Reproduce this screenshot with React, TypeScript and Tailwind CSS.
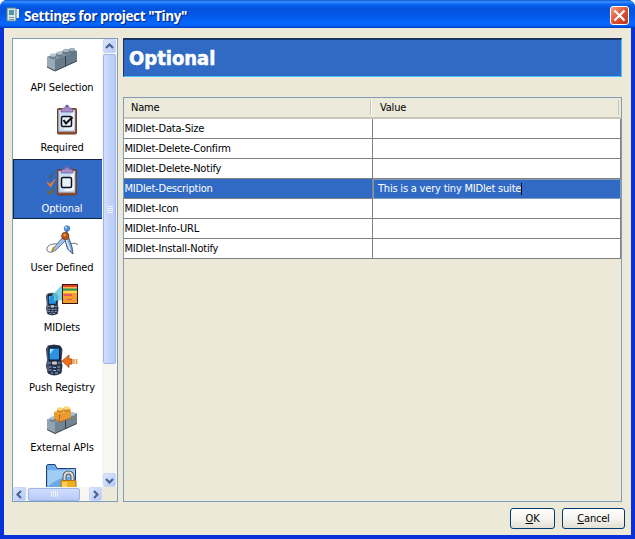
import type { ReactNode } from "react";

const Brick = ({ y = 0, colors }: { y?: number; colors: [string, string, string] }) => (
  <g transform={`translate(0 ${y})`}>
    <path d="M3 15 L24 7 L33 9 L33 19 L10 29 L3 25Z" fill={colors[1]} />
    <path d="M3 15 L24 7 L33 9 L11 18Z" fill={colors[0]} />
    <path d="M11 18 L33 9 L33 19 L11 29Z" fill={colors[1]} />
    <path d="M3 15 L11 18 L11 29 L3 25Z" fill={colors[2]} />
    <path d="M21.5 14 V24.5" stroke="#35424d" strokeWidth="1" />
    <path d="M3 25 L11 29 L33 19" stroke="#3d4852" strokeWidth="1" fill="none" />
  </g>
);

const Stud = ({ x, y, top, side }: { x: number; y: number; top: string; side: string }) => (
  <g>
    <path d={`M${x - 3} ${y} V${y + 3} Q${x} ${y + 5} ${x + 3} ${y + 3} V${y}Z`} fill={side} />
    <ellipse cx={x} cy={y} rx="3" ry="1.8" fill={top} />
  </g>
);

const ApiIcon = () => (
  <>
    <Brick colors={["#8797a5", "#687b8a", "#9aaab7"]} />
    <Stud x={9} y={13} top="#b9c9d6" side="#6c7f8e" />
    <Stud x={15.5} y={11} top="#b0c1ce" side="#667a89" />
    <Stud x={22} y={8.5} top="#a5b7c5" side="#627584" />
    <Stud x={28} y={7.5} top="#9bb0c0" side="#5d7180" />
  </>
);

const Clipboard = () => (
  <>
    <rect x="13.5" y="6.5" width="19" height="25.5" rx="1" fill="#91502c" stroke="#6b4028" />
    <path d="M14.5 8 H31 V29.5 H14.5Z" fill="#d9e9fb" />
    <path d="M15 8 V29 H29 L31 27 V8" fill="#eef5ff" stroke="#8299be" strokeWidth=".7" />
    <path d="M16 10 V28 H20 L28 10Z" fill="#c9dff8" />
    <path d="M17 10 V8 Q17 6 21 6 Q21 3 23 3 Q25 3 25 6 Q29 6 29 8 V10Z" fill="#a78dc8" stroke="#655a93" strokeWidth=".7" />
    <circle cx="23" cy="4.5" r="1" fill="#6457a4" />
    <rect x="17.5" y="14.5" width="10" height="10" rx="1.5" fill="#e5f1ff" stroke="#111" strokeWidth="1.5" />
  </>
);

const RequiredIcon = () => (
  <>
    <Clipboard />
    <path d="M19.5 18 L22 21.5 L28.5 15" stroke="#111" strokeWidth="2.1" fill="none" />
  </>
);

const OptionalIcon = () => (
  <>
    <g transform="translate(0 1)"><Clipboard /></g>
    <path d="M3 12 L6 14.5 L11 9.5 L6.5 17Z" fill="#426080" stroke="#426080" />
    <path d="M3 20 L6 22.5 L11 17.5 L6.5 25Z" fill="#f57b20" stroke="#f57b20" />
    <path d="M3 28 L6 30.5 L11 25.5 L6.5 33Z" fill="#77671e" stroke="#77671e" />
  </>
);

const CompassIcon = () => (
  <>
    <path d="M8 30 Q2 31 3 26 Q5 21 14 22 M27 21.5 Q31 20.5 34 22.5" stroke="#777" fill="none" />
    <path d="M19 15 L9 27 L8 30 L12 28 L22 18Z" fill="#9fc4ed" stroke="#53637b" strokeWidth=".9" />
    <path d="M20.5 16 L23.5 27 L29 32 L28 25 L24.5 15Z" fill="#75a9e5" stroke="#3c4c67" strokeWidth=".9" />
    <path d="M22 17 L26 28" stroke="#e4f2ff" strokeWidth="1.4" />
    <path d="M8 29 L10 25" stroke="#bf9418" strokeWidth="2" />
    <path d="M22 12 L23 8" stroke="#64728a" strokeWidth="2" />
    <circle cx="23" cy="6.5" r="2.8" fill="#4e91e0" stroke="#315da2" strokeWidth=".6" />
    <circle cx="22" cy="5.5" r="1" fill="#c5e6ff" />
    <circle cx="21.3" cy="14" r="3.7" fill="#b95717" stroke="#693418" strokeWidth=".7" />
    <circle cx="20.5" cy="13" r="1.2" fill="#efa260" />
  </>
);

const Phone = () => (
  <>
    <path d="M4 4 Q10 2 16 4 L18 7 L17 18 L18 24 L17 31 Q10 35 4 31 L2.5 24 L3.5 18 L2.5 7Z" fill="#26344e" stroke="#152034" strokeWidth=".8" />
    <path d="M4 5 V29" stroke="#8796ad" strokeWidth=".8" />
    <rect x="5" y="6" width="10.5" height="12" fill="#2b93e2" stroke="#09162b" />
    <path d="M6 7 L10 7 L6 12Z" fill="#8de5ff" />
    <rect x="8" y="19.5" width="5" height="3" rx="1" fill="#cbc9c4" />
    <path d="M4.5 21 H7 M14 21 H16.5 M5 25 H7.5 M9 25.5 H12 M13.5 25 H16 M5 28 H7.5 M9 28.5 H12 M13.5 28 H16 M7 31 H9 M11 31 H14" stroke="#9fb0cf" strokeWidth="1.2" />
  </>
);

const MidletsIcon = () => (
  <>
    <g transform="translate(.5 9) scale(.76 .73)"><Phone /></g>
    <path d="M8 13 L18 3 V18 L10 19Z" fill="#66cbdc" opacity=".85" />
    <path d="M5.5 14 H10 V19 H5.5Z" fill="#2993da" />
    <rect x="18.5" y="2.5" width="15" height="19" fill="#f69b2d" stroke="#351612" />
    <path d="M19 4 H33" stroke="#e83e2c" strokeWidth="2" />
    <path d="M19 6 H33" stroke="#ffda63" strokeWidth="1" />
    <path d="M19 7.5 H33" stroke="#279c65" strokeWidth="2" />
    <path d="M19 10 H33" stroke="#f9d944" strokeWidth="2" />
    <path d="M20 13 H28" stroke="#df3f72" strokeWidth="1.5" />
    <path d="M23 17.5 H28" stroke="#d05a68" />
  </>
);

const PushIcon = () => (
  <>
    <Phone />
    <path d="M18 19 L25 13 V17 H28 V22 H25 V25.5Z" fill="#ed711c" stroke="#9c4a1a" strokeWidth=".8" />
    <path d="M29.7 17 V22 M32.5 17 V22" stroke="#ee9b35" strokeWidth="1.7" />
  </>
);

const ExternalIcon = () => (
  <>
    <Brick y={2.5} colors={["#9dadb9", "#738593", "#91a4b2"]} />
    <Stud x={9} y={16} top="#aac4db" side="#6c8295" />
    <Stud x={28} y={12} top="#aac4db" side="#6c8295" />
    <path d="M10 10 L23 6 L27 8 V16 L16 20 L10 17Z" fill="#e79b31" />
    <path d="M10 10 L23 6 L27 8 L15.5 12Z" fill="#f7bd4d" />
    <path d="M15.5 12 V20 M10 17 L16 20 L27 16" stroke="#a96121" fill="none" strokeWidth=".8" />
    <Stud x={16} y={7} top="#ffd575" side="#cb8528" />
    <Stud x={22.5} y={6} top="#ffd575" side="#cb8528" />
  </>
);

const FolderIcon = () => (
  <>
    <path d="M2.5 36 V3.5 L4 2.5 H11 L13 6.5 H31.5 V36Z" fill="#6ca9e9" stroke="#263f77" />
    <path d="M3.5 8 Q15 9 31 7 V15 Q16 13 3.5 25Z" fill="#a0cdf6" />
    <path d="M20.5 20 V15 Q20.5 10.5 24.5 10.5 Q28.5 10.5 28.5 15 V20" fill="none" stroke="#555" strokeWidth="4" />
    <path d="M20.5 20 V15 Q20.5 10.5 24.5 10.5 Q28.5 10.5 28.5 15 V20" fill="none" stroke="#ddd" strokeWidth="2" />
    <rect x="17" y="18.5" width="15" height="15" rx="1" fill="#f0ad24" stroke="#b27413" />
    <path d="M18 20 H23 V31 H18Z" fill="#ffd15a" />
  </>
);

const items: { label: string; icon: ReactNode; selected?: boolean }[] = [
  { label: "API Selection", icon: <ApiIcon /> },
  { label: "Required", icon: <RequiredIcon /> },
  { label: "Optional", icon: <OptionalIcon />, selected: true },
  { label: "User Defined", icon: <CompassIcon /> },
  { label: "MIDlets", icon: <MidletsIcon /> },
  { label: "Push Registry", icon: <PushIcon /> },
  { label: "External APIs", icon: <ExternalIcon /> },
  { label: "", icon: <FolderIcon /> },
];

const rows = [
  ["MIDlet-Data-Size", ""],
  ["MIDlet-Delete-Confirm", ""],
  ["MIDlet-Delete-Notify", ""],
  ["MIDlet-Description", "This is a very tiny MIDlet suite"],
  ["MIDlet-Icon", ""],
  ["MIDlet-Info-URL", ""],
  ["MIDlet-Install-Notify", ""],
];

const Arrow = ({ d }: { d: string }) => (
  <div className="flex h-[14px] w-[13px] shrink-0 items-center justify-center rounded-[2px] border border-[#c9d7f8] bg-gradient-to-br from-[#dce6ff] to-[#b5c9f8]">
    <svg width="11" height="11" viewBox="0 0 11 11" fill="none" stroke="#48608c" strokeWidth="2.1"><path d={d} /></svg>
  </div>
);

export default function App() {
  return (
    <div className="h-[539px] w-[635px] overflow-hidden bg-white font-['DejaVu_Sans_Condensed','DejaVu_Sans',sans-serif] text-[11px] leading-[14px] text-black">
      <div className="flex h-full w-full flex-col overflow-hidden rounded-t-[7px] bg-[#0831d9]">
        <header className="flex h-[28px] shrink-0 items-center bg-[linear-gradient(180deg,#0a56d8_0%,#3c92ff_7%,#0764f1_15%,#0453dc_30%,#0358e8_55%,#0668ff_83%,#0560f3_92%,#003bc1_100%)] pl-[6px] pr-[6px]">
          <svg width="14" height="16" viewBox="0 0 14 16" className="mt-[2px] shrink-0">
            <path d="M9 2 H13 V11 H9Z" fill="#eef4ed" />
            <rect x="1" y="1" width="9" height="13" fill="#d9e8df" stroke="#567e94" />
            <rect x="3" y="3" width="5" height="5" fill="#5492a4" />
            <path d="M3 10.5 H8 M3 12.5 H8" stroke="#7397a2" />
          </svg>
          <h1 className="ml-[4px] mt-[4px] whitespace-nowrap font-['Open_Sans',sans-serif] text-[13.5px] font-bold leading-[18px] tracking-[-0.4px] text-white [text-shadow:1px_1px_1px_#05267d]">Settings for project "Tiny"</h1>
          <button aria-label="Close" className="ml-auto mt-[3px] flex h-[19px] w-[19px] items-center justify-center rounded-[3px] border border-white bg-gradient-to-br from-[#f19d81] via-[#df5435] to-[#bd3315]">
            <svg width="13" height="13" viewBox="0 0 13 13" stroke="white" strokeWidth="2.2"><path d="M1.5 1.5 L11.5 11.5 M11.5 1.5 L1.5 11.5" /></svg>
          </button>
        </header>

        <main className="mx-[4px] mb-[4px] flex grow flex-col bg-[#ece9d8] pl-[8px] pt-[10px]">
          <div className="flex h-[464px] shrink-0 gap-[5px]">
            <aside className="flex h-[464px] w-[106px] shrink-0 border border-[#7f9db9]">
              <div className="flex w-[89px] shrink-0 flex-col">
                <div className="h-[448px] overflow-hidden bg-white">
                  {items.map((item, i) => (
                    <div
                      key={i}
                      className={
                        item.selected
                          ? "flex h-[60px] w-[98px] flex-col items-center border border-[#102448] bg-[#316ac5] pt-[2px] text-white"
                          : "flex h-[60px] w-[98px] flex-col items-center pt-[3px]"
                      }
                    >
                      <svg width="36" height="36" viewBox="0 0 36 36" className="shrink-0">{item.icon}</svg>
                      <span className={item.selected ? "mt-[4px] whitespace-nowrap tracking-[-0.1px]" : "mt-[3px] whitespace-nowrap tracking-[-0.1px]"}>{item.label}</span>
                    </div>
                  ))}
                </div>
                <div className="flex h-[14px] items-center bg-[#f7f6f0]">
                  <Arrow d="M7 2 L3.5 5.5 L7 9" />
                  <div className="ml-[2px] flex h-[13px] w-[52px] items-center justify-center gap-px rounded-[2px] border border-[#9db5e8] bg-gradient-to-b from-[#d0ddff] to-[#b8cbf6]">
                    {[0, 1, 2, 3].map((n) => <i key={n} className="h-[6px] w-px bg-[#eef4ff]" />)}
                  </div>
                  <div className="ml-auto"><Arrow d="M4 2 L7.5 5.5 L4 9" /></div>
                </div>
              </div>
              <div className="flex w-[15px] flex-col items-center bg-[#ece9d8]">
                <div className="flex h-[448px] w-full flex-col items-center bg-[#f7f6f0]">
                  <Arrow d="M2 7 L5.5 3.5 L9 7" />
                  <div className="mt-px flex h-[310px] w-[13px] flex-col items-center justify-center gap-px rounded-[2px] border border-[#9db5e8] bg-gradient-to-r from-[#d0ddff] to-[#b8cbf6]">
                    {[0, 1, 2, 3].map((n) => <i key={n} className="h-px w-[6px] bg-[#eef4ff]" />)}
                  </div>
                  <div className="mt-auto"><Arrow d="M2 4 L5.5 7.5 L9 4" /></div>
                </div>
              </div>
            </aside>

            <section className="flex w-[499px] shrink-0 flex-col">
              <div className="flex h-[39px] shrink-0 items-center border-b border-l border-r border-t-2 border-b-[#4cc1ff] border-l-[#173664] border-r-[#4cc1ff] border-t-[#173664] bg-[#316ac5] pl-[5px]">
                <h2 className="text-[20px] font-bold leading-[24px] text-white [-webkit-text-stroke:0.5px_white]">Optional</h2>
              </div>
              <div className="mt-[20px] h-[405px] shrink-0 border border-[#7f9db9]">
                <div className="flex h-[21px] items-center border-b-2 border-[#cbc7b8] bg-[#ebeadb]">
                  <div className="flex h-[15px] w-[247px] items-center border-r border-[#c7c5b2] pl-[7px] pt-px tracking-[-0.2px]">Name</div>
                  <div className="flex h-[15px] w-[248px] items-center border-l border-r border-l-white border-r-[#c7c5b2] pl-[8px] pt-px tracking-[-0.2px]">Value</div>
                </div>
                {rows.map(([name, value]) => (
                  <div key={name} className={value ? "flex h-[20px] bg-[#316ac5] text-white" : "flex h-[20px] bg-white"}>
                    <div className="flex w-[249px] items-center whitespace-nowrap border-b border-r border-[#808080] pl-[0.5px] tracking-[-0.2px]">{name}</div>
                    <div className={value ? "flex grow items-center whitespace-nowrap border border-[#7f9db9] pl-[4px] tracking-[-0.2px]" : "grow border-b border-r border-[#808080]"}>
                      {value}{value && <i className="h-[12px] w-px bg-black" />}
                    </div>
                  </div>
                ))}
              </div>
            </section>
          </div>

          <footer className="mr-[6px] mt-[6px] flex justify-end gap-[7px]">
            <button className="h-[21px] w-[45px] rounded-[3px] border border-[#003c74] bg-gradient-to-b from-white via-[#f5f4ef] to-[#e2dfd2] tracking-[-0.2px]"><u>O</u>K</button>
            <button className="h-[21px] w-[63px] rounded-[3px] border border-[#003c74] bg-gradient-to-b from-white via-[#f5f4ef] to-[#e2dfd2] tracking-[-0.2px]"><u>C</u>ancel</button>
          </footer>
        </main>
      </div>
    </div>
  );
}
